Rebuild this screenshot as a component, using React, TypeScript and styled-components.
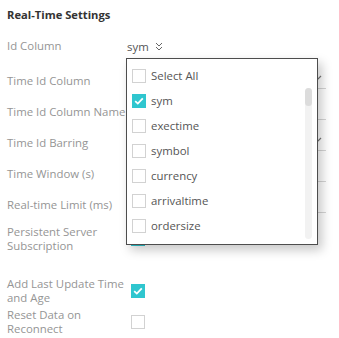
import React from 'react'
import styled, { createGlobalStyle } from 'styled-components'

const GlobalStyle = createGlobalStyle`
    body {
        margin: 0;
        background: #fff;
        font-family: "Open Sans", "Noto Sans", sans-serif;
        font-size: 11.4px;
    }
`

const Page = styled.div`
    width: 339px;
    height: 338px;
    overflow: hidden;
    padding: 0 13px 0 7px;
    box-sizing: border-box;
`
const Title = styled.h3`
    margin: 0;
    height: 30px;
    line-height: 30px;
    font-size: 11.2px;
    font-weight: 700;
    color: #333;
`
const Row = styled.div<{ $h: number; $mt?: number }>`
    display: grid;
    grid-template-columns: 120px 1fr;
    align-items: center;
    height: ${(p) => p.$h}px;
    margin-top: ${(p) => p.$mt || 0}px;
`
const Label = styled.div`
    color: #959595;
    line-height: 14px;
`
const ValueCell = styled.div`
    position: relative;
    align-self: stretch;
    display: flex;
    align-items: center;
`
const SelectValue = styled.span`
    color: #555;
    display: flex;
    align-items: center;
    gap: 6px;
`
const Field = styled.div`
    height: 17px;
    box-sizing: border-box;
    width: 100%;
    border-bottom: 1px solid #d6d6d6;
    display: flex;
    justify-content: flex-end;
    padding: 3px 4px 0 0;
`
const Box = styled.span<{ $checked?: boolean }>`
    width: 14px;
    height: 14px;
    box-sizing: border-box;
    flex: none;
    display: flex;
    align-items: center;
    justify-content: center;
    background: ${(p) => (p.$checked ? '#2fc6cf' : '#fff')};
    border: 1px solid ${(p) => (p.$checked ? '#2fc6cf' : '#d2d2d2')};
`
const RowBox = styled(Box)`
    margin-left: 4px;
`
const Dropdown = styled.div`
    position: absolute;
    top: 28px;
    left: -1px;
    width: 192px;
    height: 187px;
    box-sizing: border-box;
    background: #fff;
    border: 1px solid #4d4d4d;
    box-shadow: 4px 5px 10px rgba(0, 0, 0, 0.22);
    z-index: 5;
    padding: 4px 0 5px;
    display: flex;
    flex-direction: column;
`
const Option = styled.div`
    height: 25px;
    flex: none;
    display: flex;
    align-items: center;
    gap: 5px;
    padding-left: 5px;
    color: #555;
`
const ScrollArea = styled.div`
    flex: 1;
    display: flex;
    min-height: 0;
`
const OptionList = styled.div`
    flex: 1;
    overflow: hidden;
`
const Track = styled.div`
    width: 7px;
    margin-right: 5px;
    background: #f2f2f2;
    border-radius: 4px;
`
const Thumb = styled.div`
    height: 18px;
    background: #dcdcdc;
    border-radius: 4px;
`

const Check = () => (
    <svg width="10" height="8" viewBox="0 0 10 8">
        <path d="M1.2 4.2 L3.8 6.6 L8.8 1.4" fill="none" stroke="#fff" strokeWidth="1.8" />
    </svg>
)

const Chevrons = () => (
    <svg width="8" height="9" viewBox="0 0 8 9">
        <path d="M1 1 L4 4 L7 1 M1 5 L4 8 L7 5" fill="none" stroke="#666" strokeWidth="1" />
    </svg>
)

const Caret = () => (
    <svg width="8" height="5" viewBox="0 0 8 5">
        <path d="M1 1 L4 4 L7 1" fill="none" stroke="#777" strokeWidth="1.2" />
    </svg>
)

const columns = ['sym', 'exectime', 'symbol', 'currency', 'arrivaltime', 'ordersize']

const inputs = [
    { label: 'Time Id Column', caret: true },
    { label: 'Time Id Column Name', caret: false },
    { label: 'Time Id Barring', caret: true },
    { label: 'Time Window (s)', caret: false },
    { label: 'Real-time Limit (ms)', caret: false },
]

const App = () => {
    return (
        <>
            <GlobalStyle />
            <Page>
                <Title>Real-Time Settings</Title>
                <Row $h={32}>
                    <Label>Id Column</Label>
                    <ValueCell>
                        <SelectValue>
                            sym <Chevrons />
                        </SelectValue>
                        <Dropdown>
                            <Option>
                                <Box />
                                Select All
                            </Option>
                            <ScrollArea>
                                <OptionList>
                                    {columns.map((c) => (
                                        <Option key={c}>
                                            <Box $checked={c === 'sym'}>{c === 'sym' && <Check />}</Box>
                                            {c}
                                        </Option>
                                    ))}
                                </OptionList>
                                <Track>
                                    <Thumb />
                                </Track>
                            </ScrollArea>
                        </Dropdown>
                    </ValueCell>
                </Row>
                {inputs.map((f, i) => (
                    <Row key={f.label} $h={31} $mt={i === 0 ? 3 : 0}>
                        <Label>{f.label}</Label>
                        <ValueCell>
                            <Field>{f.caret && <Caret />}</Field>
                        </ValueCell>
                    </Row>
                ))}
                <Row $h={38}>
                    <Label>Persistent Server Subscription</Label>
                    <ValueCell>
                        <RowBox $checked>
                            <Check />
                        </RowBox>
                    </ValueCell>
                </Row>
                <Row $h={32} $mt={17}>
                    <Label>Add Last Update Time and Age</Label>
                    <ValueCell>
                        <RowBox $checked>
                            <Check />
                        </RowBox>
                    </ValueCell>
                </Row>
                <Row $h={30}>
                    <Label>Reset Data on Reconnect</Label>
                    <ValueCell>
                        <RowBox />
                    </ValueCell>
                </Row>
            </Page>
        </>
    )
}

export default App
